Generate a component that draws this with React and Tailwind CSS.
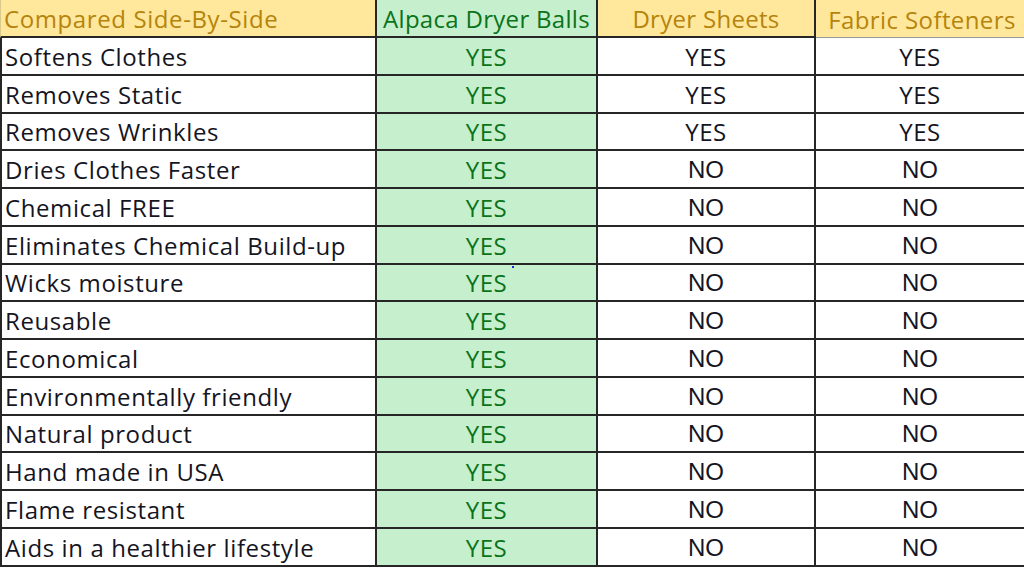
const rows = [
  ['Softens Clothes', 'YES', 'YES', 'YES'],
  ['Removes Static', 'YES', 'YES', 'YES'],
  ['Removes Wrinkles', 'YES', 'YES', 'YES'],
  ['Dries Clothes Faster', 'YES', 'NO', 'NO'],
  ['Chemical FREE', 'YES', 'NO', 'NO'],
  ['Eliminates Chemical Build-up', 'YES', 'NO', 'NO'],
  ['Wicks moisture', 'YES', 'NO', 'NO'],
  ['Reusable', 'YES', 'NO', 'NO'],
  ['Economical', 'YES', 'NO', 'NO'],
  ['Environmentally friendly', 'YES', 'NO', 'NO'],
  ['Natural product', 'YES', 'NO', 'NO'],
  ['Hand made in USA', 'YES', 'NO', 'NO'],
  ['Flame resistant', 'YES', 'NO', 'NO'],
  ['Aids in a healthier lifestyle', 'YES', 'NO', 'NO'],
]

function Value({ v }) {
  if (v === 'NO') {
    return <span className="font-['Liberation_Sans',Arial,sans-serif] text-[24px]">NO</span>
  }
  return <span className="text-[24px] tracking-[0.5px]">YES</span>
}

export default function App() {
  return (
    <div className="relative w-[1024px] h-[568px] overflow-hidden bg-white text-[#15151f] font-['Open_Sans',sans-serif] font-medium">
      <div className="grid grid-cols-[377px_221px_218px_1fr]">
        {/* cabecera */}
        <div className="h-[38px] flex items-center pl-[3px] pt-[2px] bg-[#FFE79C] text-[#B5840C] text-[24px] tracking-[0.6px] border-l border-l-[#d9c98a] border-r-2 border-b-2 border-[#262626]">
          Compared Side-By-Side
        </div>
        <div className="h-[38px] flex items-center justify-center pt-[2px] bg-[#C6EFCE] text-[#0B7319] text-[24px] tracking-[0.3px] border-r-2 border-b-2 border-[#262626]">
          Alpaca Dryer Balls
        </div>
        <div className="h-[38px] flex items-center justify-center pt-[2px] bg-[#FFE79C] text-[#B5840C] text-[24px] tracking-[0.3px] border-r-2 border-b-2 border-[#262626]">
          Dryer Sheets
        </div>
        <div className="h-[38px] flex items-center justify-center pt-[2px] pl-[4px] bg-[#FFE79C] text-[#B5840C] text-[24px] tracking-[0.4px] border-b border-[#9a9a9a]">
          Fabric Softeners
        </div>

        {rows.map(([label, a, b, c]) => (
          <div key={label} className="contents">
            <div className="h-[37.75px] flex items-center pl-[3px] pt-[2px] text-[24px] tracking-[0.6px] border-l-2 border-r-2 border-b-2 border-[#262626]">
              {label}
            </div>
            <div className="h-[37.75px] flex items-center justify-center pt-[2px] bg-[#C6EFCE] text-[#0B7319] border-r-2 border-b-2 border-[#262626]">
              <Value v={a} />
            </div>
            <div className="h-[37.75px] flex items-center justify-center pt-[2px] border-r-2 border-b-2 border-[#262626]">
              <Value v={b} />
            </div>
            <div className="h-[37.75px] flex items-center justify-center pt-[2px] border-b-2 border-[#262626]">
              <Value v={c} />
            </div>
          </div>
        ))}
      </div>

      {/* punto azul suelto */}
      <div className="absolute left-[512px] top-[266px] w-[2px] h-[2px] bg-[#1d2bd6]" />
    </div>
  )
}
